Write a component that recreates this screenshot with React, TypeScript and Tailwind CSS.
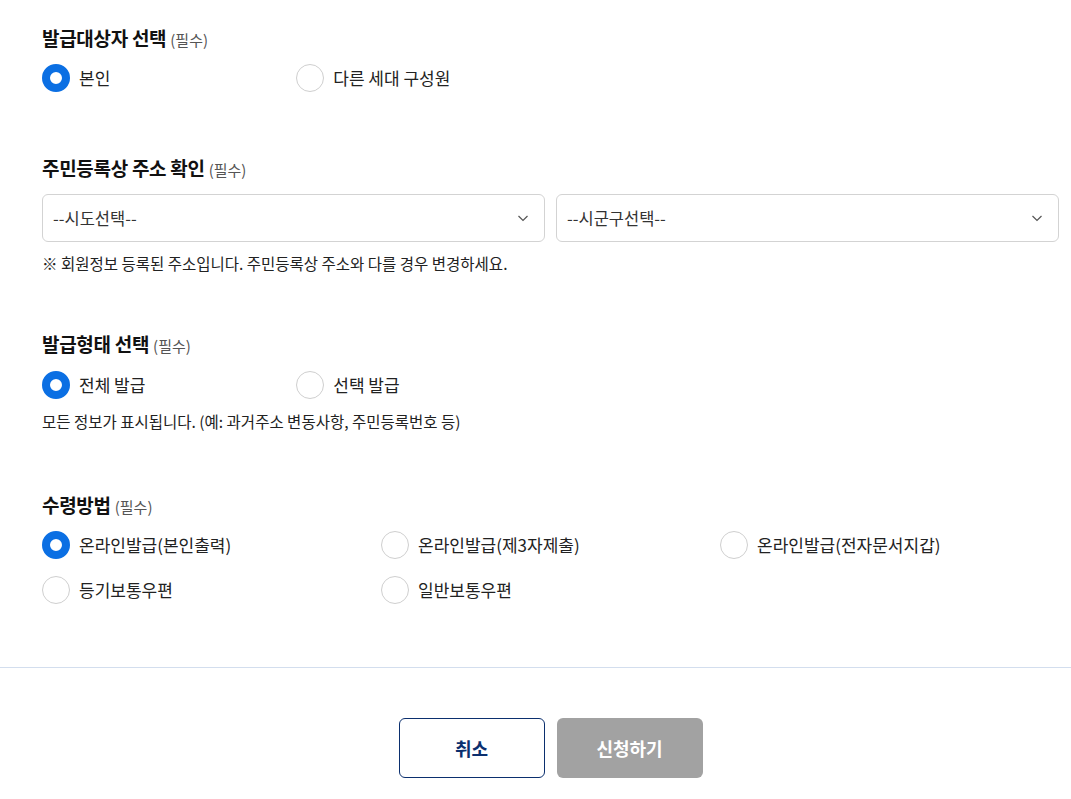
import React, { useState } from 'react';

const FONT = { fontFamily: '"Noto Sans CJK KR", "Noto Sans", sans-serif' };

interface RadioProps {
  label: string;
  checked: boolean;
  onSelect: () => void;
}

const Radio: React.FC<RadioProps> = ({ label, checked, onSelect }) => (
  <button type="button" onClick={onSelect} className="flex items-center gap-[9px] h-[28px] text-left">
    <span
      className={
        checked
          ? 'w-[28px] h-[28px] rounded-full border-[8px] border-[#0b6fe3] bg-white shrink-0'
          : 'w-[28px] h-[28px] rounded-full border border-[#cfcfcf] bg-white shrink-0'
      }
    />
    <span className="text-[17px] leading-[24px] text-[#222]">{label}</span>
  </button>
);

const Title: React.FC<{ children: React.ReactNode }> = ({ children }) => (
  <h2 className="flex items-baseline gap-1 h-[24px] text-[19px] font-bold text-[#111] tracking-[-0.3px] leading-[24px]">
    {children}
    <span className="text-[15px] font-normal text-[#555] tracking-normal">(필수)</span>
  </h2>
);

const Chevron = () => (
  <svg width="12" height="12" viewBox="0 0 12 12" fill="none" stroke="#555" strokeWidth="1.2">
    <path d="M1.5 4 L6 8.5 L10.5 4" />
  </svg>
);

const Select: React.FC<{ placeholder: string }> = ({ placeholder }) => (
  <div className="flex-1 h-[48px] rounded-[6px] border border-[#d3d3d3] flex items-center justify-between pl-[10px] pr-[15px]">
    <span className="text-[16.5px] text-[#333]">{placeholder}</span>
    <Chevron />
  </div>
);

export default function App() {
  const [target, setTarget] = useState('self');
  const [type, setType] = useState('all');
  const [method, setMethod] = useState('print');

  return (
    <div className="w-[1071px] min-h-[799px] bg-white" style={FONT}>
      <div className="pl-[42px] pr-[12px] pt-[26px]">
        {/* 발급대상자 */}
        <Title>발급대상자 선택</Title>
        <div className="grid grid-cols-4 mt-[14px]">
          <Radio label="본인" checked={target === 'self'} onSelect={() => setTarget('self')} />
          <Radio label="다른 세대 구성원" checked={target === 'other'} onSelect={() => setTarget('other')} />
        </div>

        {/* 주소 */}
        <div className="mt-[64px]">
          <Title>주민등록상 주소 확인</Title>
          <div className="flex gap-[11px] mt-[14px]">
            <Select placeholder="--시도선택--" />
            <Select placeholder="--시군구선택--" />
          </div>
          <p className="mt-[10px] text-[15.5px] text-[#222] leading-[22px]">
            ※ 회원정보 등록된 주소입니다. 주민등록상 주소와 다를 경우 변경하세요.
          </p>
        </div>

        {/* 발급형태 */}
        <div className="mt-[58px]">
          <Title>발급형태 선택</Title>
          <div className="grid grid-cols-4 mt-[15px]">
            <Radio label="전체 발급" checked={type === 'all'} onSelect={() => setType('all')} />
            <Radio label="선택 발급" checked={type === 'part'} onSelect={() => setType('part')} />
          </div>
          <p className="mt-[11px] text-[15.5px] text-[#222] leading-[22px]">
            모든 정보가 표시됩니다. (예: 과거주소 변동사항, 주민등록번호 등)
          </p>
        </div>

        {/* 수령방법 */}
        <div className="mt-[61px]">
          <Title>수령방법</Title>
          <div className="grid grid-cols-3 gap-y-[17px] mt-[14px]">
            <Radio label="온라인발급(본인출력)" checked={method === 'print'} onSelect={() => setMethod('print')} />
            <Radio label="온라인발급(제3자제출)" checked={method === 'third'} onSelect={() => setMethod('third')} />
            <Radio label="온라인발급(전자문서지갑)" checked={method === 'wallet'} onSelect={() => setMethod('wallet')} />
            <Radio label="등기보통우편" checked={method === 'reg'} onSelect={() => setMethod('reg')} />
            <Radio label="일반보통우편" checked={method === 'normal'} onSelect={() => setMethod('normal')} />
          </div>
        </div>
      </div>

      <div className="mt-[63px] border-t border-[#d3deee]" />

      <div className="flex justify-center gap-[12px] pl-[42px] pr-[12px] pt-[50px] pb-[21px]">
        <button className="w-[146px] h-[60px] rounded-[6px] border border-[#0b2f6e] bg-white text-[18px] font-bold text-[#0b2f6e]">
          취소
        </button>
        <button className="w-[146px] h-[60px] rounded-[6px] bg-[#a2a2a2] text-[18px] font-bold text-white">
          신청하기
        </button>
      </div>
    </div>
  );
}
